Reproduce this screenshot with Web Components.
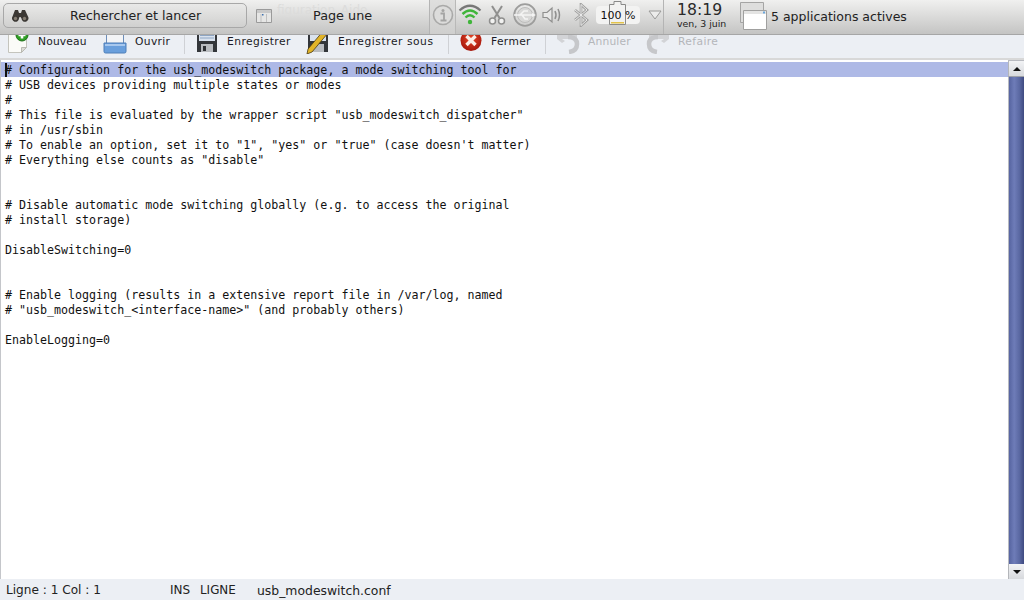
<!DOCTYPE html>
<html lang="fr">
<head>
<meta charset="utf-8">
<title>usb_modeswitch.conf</title>
<style>
  html, body { margin: 0; height: 100%; overflow: hidden; background: #fff; }
  body { display: flex; flex-direction: column; width: 1024px; height: 600px; font-family: "DejaVu Sans", sans-serif; color: #1c1c1c; }
</style>
</head>
<body>
<desktop-panel></desktop-panel>
<app-toolbar>
  <tool-button icon="new" label="Nouveau" width="97" ls=".18"></tool-button>
  <tool-button icon="open" label="Ouvrir" width="80" ls=".35"></tool-button>
  <tool-sep></tool-sep>
  <tool-button icon="save" label="Enregistrer" width="111" ls=".45"></tool-button>
  <tool-button icon="saveas" label="Enregistrer sous" width="141" ls=".55"></tool-button>
  <tool-sep></tool-sep>
  <tool-button icon="close" label="Fermer" width="85" ls=".35"></tool-button>
  <tool-sep></tool-sep>
  <tool-button icon="undo" label="Annuler" width="90" ls=".18" disabled></tool-button>
  <tool-button icon="redo" label="Refaire" width="90" ls=".4" disabled></tool-button>
</app-toolbar>
<editor-pane></editor-pane>
<status-bar></status-bar>

<script>
// ─── Icones ─────────────────────────────────────────────────────────────
const ICONS = {
  new: `<svg width="24" height="24" viewBox="0 0 24 24">
    <path d="M2.500 4.500h18v13l-5 5h-13z" fill="#fbfbf8" stroke="#c4c4bd"/>
    <path d="M20.500 17.500h-5v5z" fill="#dcdcd6" stroke="#b9b9b2"/>
    <circle cx="16" cy="5" r="6" fill="#2f9e25" stroke="#1d6f18"/>
    <path d="M16 1.500v7M12.500 5h7" stroke="#fff" stroke-width="2.600"/></svg>`,
  open: `<svg width="24" height="24" viewBox="0 0 24 24">
    <path d="M3.500 2v12h17V2" fill="#f3f4f6" stroke="#6d8db8"/>
    <path d="M1 13h22v8.500q0 1.500-1.500 1.500h-19Q1 23 1 21.500z" fill="#6a9fdc" stroke="#4f7fb8"/>
    <path d="M2 14h20v2H2z" fill="#a8c8ee"/></svg>`,
  save: `<svg width="24" height="24" viewBox="0 0 24 24">
    <path d="M2 0h20v22H2z" fill="#33363a"/>
    <path d="M4 0h16v11H4z" fill="#d9e2ee"/>
    <path d="M5 3h14M5 5.500h14M5 8h14" stroke="#8ea6c4"/>
    <path d="M6 14h12v8H6z" fill="#b9bcc0"/>
    <path d="M8 16h3v5H8z" fill="#2f3236"/></svg>`,
  saveas: `<svg width="24" height="24" viewBox="0 0 24 24">
    <path d="M2 0h20v22H2z" fill="#33363a"/>
    <path d="M4 0h16v11H4z" fill="#d9e2ee"/>
    <path d="M6 14h12v8H6z" fill="#b9bcc0"/>
    <path d="M18 0l4 3L6 22l-5 2 1-5z" fill="#e2b428" stroke="#4a3a10" stroke-width=".8"/>
    <path d="M18 0l4 3-2 2.500-4-3z" fill="#c8362a"/></svg>`,
  close: `<svg width="24" height="24" viewBox="0 0 24 24">
    <defs><radialGradient id="r" cx=".5" cy=".4" r=".65"><stop offset="0" stop-color="#e8492a"/><stop offset="1" stop-color="#a01208"/></radialGradient></defs>
    <circle cx="12" cy="10.500" r="10.500" fill="url(#r)"/>
    <path d="M7.500 6l9 9M16.500 6l-9 9" stroke="#fbeee6" stroke-width="3.400"/></svg>`,
  undo: `<svg width="24" height="24" viewBox="0 0 24 24" fill="none">
    <path d="M1 4h20v5H6l3 2-3 2-5-4z" fill="#d2d3d6"/>
    <path d="M12 7q9 0 9 7t-8 8" stroke="#c6c7ca" stroke-width="4.500"/></svg>`,
  redo: `<svg width="24" height="24" viewBox="0 0 24 24" fill="none">
    <path d="M23 4H3v5h15l-3 2 3 2 5-4z" fill="#d2d3d6"/>
    <path d="M12 7q-9 0-9 7t8 8" stroke="#c6c7ca" stroke-width="4.500"/></svg>`,
};

// ─── Panneau du haut ────────────────────────────────────────────────────
class DesktopPanel extends HTMLElement {
  constructor() {
    super();
    this.attachShadow({ mode: 'open' });
    this.shadowRoot.innerHTML = `
      <style>
        :host { display: flex; flex: none; height: 35px; position: relative; z-index: 2; box-sizing: border-box;
          background: linear-gradient(#f0f0ef, #c4c4c3); border-bottom: 1px solid #a6a6a6; color: #222; align-items: flex-start; }
        .search { box-sizing: border-box; width: 244px; height: 25px; margin: 3px 0 0 3px; display: flex; align-items: center;
          border: 1px solid #a8a8a8; border-radius: 5px; background: linear-gradient(#e9e9e8, #d0d0cf); font-size: 12.600px; }
        .search svg { margin-left: 7px; flex: none; }
        .search span { margin-left: 41px; }
        .page { width: 168px; height: 25px; margin: 3px 0 0 8px; display: flex; align-items: center; font-size: 12.800px; position: relative; }
        .page span { margin-left: 41px; position: relative; }
        .page svg { flex: none; margin-left: 1px; }
        .ghost { position: absolute; left: 22px; top: 0; font-size: 12px; color: #dcdcdb; white-space: nowrap; word-spacing: 2px; }
        .tray { display: flex; height: 34px; box-sizing: border-box; padding-bottom: 4px; border-left: 1px solid #b4b4b4; margin-left: 6px; align-items: center; }
        .info { width: 26px; height: 34px; align-self: flex-start; display: flex; align-items: center; justify-content: center; padding-bottom: 4px; box-sizing: border-box;
          background: linear-gradient(#dfdfde, #cfcfce); border-right: 1px solid #b9b9b8; }
        .tray svg { flex: none; display: block; }
        .batt { position: relative; width: 44px; height: 18px; margin-left: 7px; box-sizing: border-box; background: #f3f3f2; border-radius: 4px;
          font-size: 11px; display: flex; align-items: center; justify-content: center; color: #111; white-space: nowrap; }
        .batt svg { position: absolute; left: 13px; top: -5px; }
        .batt span { position: relative; }
        .clock { border-left: 1px solid #b4b4b4; height: 34px; align-self: flex-start; margin-left: 1px; width: 76px; box-sizing: border-box; padding-left: 13px; flex: none; }
        .time { font-size: 15.700px; line-height: 18px; margin-top: 1px; color: #2a2a2a; }
        .date { font-size: 9.400px; line-height: 11px; margin-top: -1px; color: #222; white-space: nowrap; }
        .apps { display: flex; align-items: center; height: 30px; font-size: 12.500px; white-space: nowrap; align-self: flex-start; margin-top: 1px; }
        .apps svg { margin-right: 4px; flex: none; }
      </style>
      <div class="search">
        <svg width="18" height="13" viewBox="0 0 18 13">
          <path d="M4 1h3l1 3h2l1-3h3l3 6.500a3.500 3.500 0 1 1-6.500 2L9.500 8h-1l-.5 1.500a3.500 3.500 0 1 1-6.500-2z" fill="#3c3834"/>
          <circle cx="4.500" cy="9.500" r="1.700" fill="#857d72"/><circle cx="13.500" cy="9.500" r="1.700" fill="#857d72"/>
        </svg>
        <span>Rechercher et lancer</span>
      </div>
      <div class="page">
        <svg width="16" height="14" viewBox="0 0 16 14">
          <path d="M.5.500h15v13H.5z" fill="#e6e6e5" stroke="#9a9a9a"/><path d="M1 1h14v3H1z" fill="#c9c9c9"/>
          <path d="M6 5h1.500v1.500H6z" fill="#3c70b0"/><path d="M10.500 5v8M5 5v8" stroke="#c0c0c0"/>
        </svg>
        <div class="ghost" aria-hidden="true">figuration Aide</div>
        <span>Page une</span>
      </div>
      <div class="tray">
        <div class="info">
          <svg width="22" height="22" viewBox="0 0 22 22" fill="none">
            <circle cx="11" cy="11" r="9.500" fill="#dcdcdb" stroke="#a9a9a8" stroke-width="1.600"/>
            <circle cx="11" cy="6.500" r="1.500" fill="#a4a4a3"/>
            <path d="M8.500 9.500H12v7M8.500 16.500h6" stroke="#a4a4a3" stroke-width="1.800"/>
          </svg>
        </div>
        <svg width="24" height="24" viewBox="0 0 24 24" fill="none" style="margin-left:2px">
          <path d="M1.500 7.500Q12-2 22.500 7.500" stroke="#777" stroke-width="2.200"/>
          <path d="M4.500 11Q12 4 19.500 11" stroke="#3fb53a" stroke-width="2.400"/>
          <path d="M7.500 14.500Q12 10 16.500 14.500" stroke="#3fb53a" stroke-width="2.400"/>
          <circle cx="12" cy="19" r="2.200" fill="#3fb53a"/>
        </svg>
        <svg width="18" height="20" viewBox="0 0 18 20" fill="none" stroke="#8f8f8e" stroke-width="1.500" style="margin-left:6px">
          <path d="M4 1l7.500 12M14 1L6.500 13" stroke-width="2"/>
          <circle cx="4.500" cy="16" r="3" fill="#f2f2f1"/><circle cx="13.500" cy="16" r="3" fill="#f2f2f1"/>
        </svg>
        <svg width="24" height="24" viewBox="0 0 24 24" fill="none" style="margin-left:7px">
          <circle cx="12" cy="12" r="10.800" stroke="#9d9d9c" stroke-width="1.800"/>
          <circle cx="12" cy="12" r="7.500" stroke="#bdbdbc" fill="#d8d8d7"/>
          <path d="M1 12h19M7 12l4-4h4M9 12l3 4h3" stroke="#f4f4f3" stroke-width="1.600"/>
          <path d="M19 10l4 2-4 2z" fill="#f4f4f3"/>
        </svg>
        <svg width="20" height="20" viewBox="0 0 20 20" fill="none" style="margin-left:5px">
          <path d="M1 7.500h4L10 3v14l-5-4.500H1z" fill="#e8e8e7" stroke="#8f8f8e" stroke-width="1.200"/>
          <path d="M13 6q2 4 0 8M16 4q3 6 0 12" stroke="#8f8f8e" stroke-width="1.500"/>
        </svg>
        <svg width="16" height="24" viewBox="0 0 16 24" fill="none" style="margin-left:11px">
          <path d="M2 7l12 10-6 5.500V1.500L14 7 2 17" stroke="#a0a09f" stroke-width="2.600"/>
          <path d="M2 7l12 10-6 5.500V1.500L14 7 2 17" stroke="#f1f1f0" stroke-width=".9"/>
        </svg>
        <div class="batt">
          <svg width="17" height="24" viewBox="0 0 17 24" fill="none">
            <path d="M5 .5h7v3h4.500v20H.5v-20H5z" fill="#f2f2f1" stroke="#8a8a89"/>
            <path d="M2 21h13v1.500H2z" fill="#e3c34a"/>
          </svg>
          <span>100 %</span>
        </div>
        <svg width="14" height="10" viewBox="0 0 14 10" style="margin-left:8px">
          <path d="M1 1h12L7 9z" fill="#ececeb" stroke="#9a9a99"/>
        </svg>
        <div class="clock">
          <div class="time">18:19</div>
          <div class="date">ven, 3 juin</div>
        </div>
        <div class="apps">
          <svg width="28" height="30" viewBox="0 0 28 30">
            <path d="M1.500 1.500h23v20h-23z" fill="#dededd" stroke="#a5a5a4"/>
            <path d="M4.500 9.500h23v19h-23z" fill="#fff" stroke="#a0a09f"/>
            <path d="M5 10h22v3H5z" fill="#e4e4e3"/><path d="M24 10.500h2v2h-2z" fill="#6aa6dc"/>
          </svg>
          <span>5 applications actives</span>
        </div>
      </div>`;
  }
}

// ─── Barre d'outils ─────────────────────────────────────────────────────
class AppToolbar extends HTMLElement {
  constructor() {
    super();
    this.attachShadow({ mode: 'open' });
    this.shadowRoot.innerHTML = `
      <style>
        :host { display: flex; flex: none; height: 25px; box-sizing: border-box; padding-left: 7px; overflow: hidden;
          background: #eceff4; border-bottom: 2px solid #d8d8d8; align-items: flex-start; }
      </style>
      <slot></slot>`;
  }
}

class ToolButton extends HTMLElement {
  connectedCallback() {
    if (this.shadowRoot) return;
    this.attachShadow({ mode: 'open' });
    const w = this.getAttribute('width');
    const ls = this.getAttribute('ls') || '.18';
    this.shadowRoot.innerHTML = `
      <style>
        :host { display: flex; flex: none; align-items: flex-start; width: ${w}px; height: 23px; font-size: 10.700px; color: ${this.hasAttribute('disabled') ? '#b4b6ba' : '#1a1a24'}; white-space: nowrap; letter-spacing: ${ls}px; }
        .ic { width: 22px; height: 24px; margin-top: -5px; flex: none; margin-right: 9px; }
        .ic svg { display: block; margin-left: -1px; }
        .lb { line-height: 13px; margin-top: 0; }
      </style>
      <div class="ic">${ICONS[this.getAttribute('icon')] || ''}</div>
      <span class="lb">${this.getAttribute('label')}</span>`;
  }
}

class ToolSep extends HTMLElement {
  constructor() {
    super();
    this.attachShadow({ mode: 'open' });
    this.shadowRoot.innerHTML = `<style>:host { display: block; flex: none; width: 1px; height: 19px; margin: 0 11px 0 0; background: #cfd1d5; }</style>`;
  }
}

// ─── Zone de texte ──────────────────────────────────────────────────────
const FILE_TEXT = `# Configuration for the usb_modeswitch package, a mode switching tool for
# USB devices providing multiple states or modes
#
# This file is evaluated by the wrapper script "usb_modeswitch_dispatcher"
# in /usr/sbin
# To enable an option, set it to "1", "yes" or "true" (case doesn't matter)
# Everything else counts as "disable"


# Disable automatic mode switching globally (e.g. to access the original
# install storage)

DisableSwitching=0


# Enable logging (results in a extensive report file in /var/log, named
# "usb_modeswitch_<interface-name>" (and probably others)

EnableLogging=0`;

class EditorPane extends HTMLElement {
  constructor() {
    super();
    this.attachShadow({ mode: 'open' });
    const rows = FILE_TEXT.split('\n').map((l, i) => {
      const safe = l.replace(/&/g, '&amp;').replace(/</g, '&lt;') || '&nbsp;';
      return `<div class="row${i === 0 ? ' cur' : ''}">${safe}</div>`;
    }).join('');
    this.shadowRoot.innerHTML = `
      <style>
        :host { display: flex; flex: 1; min-height: 0; background: #fff; }
        .text { flex: 1; min-width: 0; position: relative; border-left: 1px solid #c4c6ca; padding-top: 2px; overflow: hidden;
          font: 11.650px/17px "DejaVu Sans Mono", monospace; color: #111; }
        .row { padding-left: 4px; height: 15px; white-space: pre; }
        .cur { background: #aeb9e6; }
        .caret { position: absolute; left: 4px; top: 3px; width: 2px; height: 14px; background: #111; }
      </style>
      <div class="text">${rows}<div class="caret"></div></div>
      <v-scroll></v-scroll>`;
  }
}

class VScroll extends HTMLElement {
  constructor() {
    super();
    this.attachShadow({ mode: 'open' });
    this.shadowRoot.innerHTML = `
      <style>
        :host { display: flex; flex-direction: column; flex: none; width: 16px; background: #b8bac0; }
        .btn { flex: none; height: 16px; box-sizing: border-box; display: flex; align-items: center; justify-content: center;
          background: linear-gradient(#f2f3f5, #d7d9dd); border-left: 1px solid #b4b6ba; }
        .up { border-bottom: 1px solid #9da0a8; }
        .down { height: 15px; }
        .thumb { flex: 1; margin-left: 1px; background: linear-gradient(90deg, #5664a0, #6e7cb8 35%, #5a68a2 70%, #3f4a80); }
        i { width: 0; height: 0; border: 4px solid transparent; border-top: 0; border-bottom: 4px solid #111; }
        .down i { border-bottom: 0; border-top: 4px solid #111; }
      </style>
      <div class="btn up" style="margin-top:1px"><i></i></div>
      <div class="thumb"></div>
      <div class="btn down"><i></i></div>`;
  }
}

// ─── Barre d'etat ───────────────────────────────────────────────────────
class StatusBar extends HTMLElement {
  constructor() {
    super();
    this.attachShadow({ mode: 'open' });
    this.shadowRoot.innerHTML = `
      <style>
        :host { display: flex; flex: none; height: 21px; align-items: center; background: #eceff4; font-size: 12px; color: #222; white-space: nowrap; padding-left: 6px; padding-top: 1px; box-sizing: border-box; }
        .pos { width: 164px; flex: none; font-size: 12.120px; }
        .mode { width: 30px; flex: none; }
        .sel { width: 57px; flex: none; font-size: 11.900px; }
        .file { font-size: 12.400px; }
      </style>
      <span class="pos">Ligne : 1 Col : 1</span>
      <span class="mode">INS</span>
      <span class="sel">LIGNE</span>
      <span class="file">usb_modeswitch.conf</span>`;
  }
}

customElements.define('desktop-panel', DesktopPanel);
customElements.define('app-toolbar', AppToolbar);
customElements.define('tool-button', ToolButton);
customElements.define('tool-sep', ToolSep);
customElements.define('editor-pane', EditorPane);
customElements.define('v-scroll', VScroll);
customElements.define('status-bar', StatusBar);
</script>
</body>
</html>
